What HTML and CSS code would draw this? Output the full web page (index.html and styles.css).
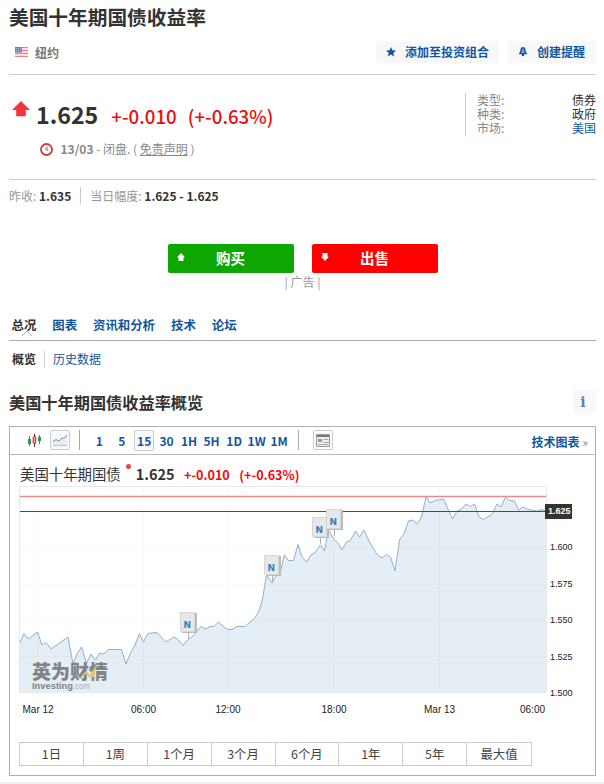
FILE: index.html
```html
<!DOCTYPE html>
<html lang="zh-CN">
<head>
    <meta charset="UTF-8">
    <meta name="viewport" content="width=device-width, initial-scale=1.0">
    <title>美国十年期国债收益率</title>
    <link rel="stylesheet" href="styles.css">
</head>
<body>
    <div class="page">
        <h1>美国十年期国债收益率</h1>
        <div class="exchange-row">
            <svg class="flag" width="13" height="10" viewBox="0 0 13 10">
                <rect width="13" height="10" fill="#f5dfe2"/>
                <path d="M0 .5h13M0 3.5h13M0 6.5h13M0 9.5h13" stroke="#e5848c"/>
                <rect width="7" height="5.5" fill="#7380b5"/>
                <path d="M1 1.5h5M1 3.5h5" stroke="#b5bddb" stroke-dasharray="1 1"/>
            </svg>
            <span class="exchange">纽约</span>
            <a class="tool-btn portfolio">
                <svg width="10" height="10" viewBox="0 0 10 10"><path d="M5 0l1.4 3.3 3.6.3-2.7 2.3.8 3.6L5 7.6 1.9 9.5l.8-3.6L0 3.6l3.6-.3z" fill="#1256a0"/></svg>
                <span>添加至投资组合</span>
            </a>
            <a class="tool-btn alert">
                <svg width="10" height="10" viewBox="0 0 10 10"><path d="M5 .8C3 .8 3 2.8 2.9 4.5L1.9 6.6h6.2L7.1 4.5C7 2.8 7 .8 5 .8z" fill="#7fa3cb" stroke="#1256a0" stroke-width="1.4"/><path d="M3.8 7h2.4v2H3.8z" fill="#1256a0"/></svg>
                <span>创建提醒</span>
            </a>
        </div>

        <div class="quote">
            <div class="quote-left">
                <div class="price-row">
                    <svg class="arrow" width="18" height="16" viewBox="0 0 18 16"><path d="M9 0l9 9h-4.2v6.2H4.2V9H0z" fill="#f5333a"/></svg>
                    <span class="price">1.625</span>
                    <span class="change">+-0.010</span>
                    <span class="percent">(+-0.63%)</span>
                </div>
                <div class="status">
                    <svg width="13" height="13" viewBox="0 0 13 13"><circle cx="6.5" cy="6.5" r="5.5" fill="none" stroke="#d8323c" stroke-width="1.8"/><path d="M7 3.5v3.2l-2-.8M7 6.5l1 1.5" fill="none" stroke="#777"/></svg>
                    <span><b>13/03</b> - 闭盘. ( <a>免责声明</a> )</span>
                </div>
            </div>
            <dl class="facts">
                <dt>类型:</dt><dd>债券</dd>
                <dt>种类:</dt><dd>政府</dd>
                <dt>市场:</dt><dd class="link">美国</dd>
            </dl>
        </div>

        <div class="summary">
            <span>昨收: <b>1.635</b></span>
            <span>当日幅度: <b>1.625 - 1.625</b></span>
        </div>

        <div class="trade">
            <a class="buy"><svg width="8" height="8" viewBox="0 0 8 8"><path d="M4 0l4 4.2H6.5V8h-5V4.2H0z" fill="#fff"/></svg>购买</a>
            <a class="sell"><svg width="8" height="8" viewBox="0 0 8 8"><path d="M4 8l4-4.2H6.5V0h-5v3.8H0z" fill="#fff"/></svg>出售</a>
        </div>
        <div class="ad">| 广告 |</div>

        <nav class="tabs">
            <a class="active">总况<svg width="10" height="6" viewBox="0 0 10 6"><path d="M0 6l5-5 5 5" fill="#fff" stroke="#b5b5b5"/></svg></a>
            <a>图表</a>
            <a>资讯和分析</a>
            <a>技术</a>
            <a>论坛</a>
        </nav>
        <nav class="subtabs">
            <a class="active">概览</a>
            <a>历史数据</a>
        </nav>

        <div class="overview-head">
            <h2>美国十年期国债收益率概览</h2>
            <span class="info">i</span>
        </div>

        <div class="chart-box">
            <div class="toolbar">
                <svg class="candles" width="13" height="13" viewBox="0 0 13 13">
                    <path d="M1.5 2v10M11.5 1v9" stroke="#289c48"/>
                    <path d="M6.5 0v13" stroke="#8b2020"/>
                    <path d="M0 5h3v5H0zM10 3h3v4h-3z" fill="#289c48"/>
                    <rect x="5.2" y="2.5" width="2.6" height="7" rx="1" fill="#f7a0a0" stroke="#a12c2c"/>
                </svg>
                <span class="area-btn">
                    <svg width="14" height="12" viewBox="0 0 14 12"><path d="M0 7.5l3-2 3 1.5 3-3 2 .3L14 1v11H0z" fill="#e4ebf3"/><path d="M0 7.5l3-2 3 1.5 3-3 2 .3L14 1" fill="none" stroke="#6f93c0"/><path d="M0 11.5h14" stroke="#b3c3d6"/></svg>
                </span>
                <div class="intervals">
                    <a>1</a>
                    <a>5</a>
                    <a class="selected">15</a>
                    <a>30</a>
                    <a>1H</a>
                    <a>5H</a>
                    <a>1D</a>
                    <a>1W</a>
                    <a>1M</a>
                </div>
                <span class="news-btn">
                    <svg width="14" height="13" viewBox="0 0 14 13"><path d="M.5.5h13v12H.5z" fill="#eee" stroke="#999"/><path d="M1 2h12" stroke="#777" stroke-width="2"/><path d="M2 5h4v3H2z" fill="#999"/><path d="M7.5 5.5h5M7.5 8.5h5M2 10.5h10" stroke="#aaa"/></svg>
                </span>
                <a class="tech-link">技术图表 <i>»</i></a>
            </div>
            <div class="legend">
                <span class="name">美国十年期国债</span>
                <span class="dot"></span>
                <b class="last">1.625</b>
                <b class="diff">+-0.010</b>
                <b class="diff">(+-0.63%)</b>
            </div>
            <svg class="chart" width="585" height="232" viewBox="10 486 585 232">
                <path d="M19.5 693V486.5H546.5V693" fill="none" stroke="#e8e8e8"/>
                <path id="area" class="area"/>
                <path class="grid" d="M20 547.5H546M20 584.5H546M20 620.5H546M20 656.5H546M37.5 487V693M143.5 487V693M228.5 487V693M333.5 487V693M439.5 487V693"/>
                <path id="line" class="line"/>
                <path d="M20 496.5H546" stroke="#e88b8f" stroke-width="1.4"/>
                <path d="M20 511.5H546" stroke="#55494d" stroke-width="1.2"/>
                <g id="news"></g>
                <g class="watermark">
                    <text class="cn" x="32" y="679" textLength="76" lengthAdjust="spacingAndGlyphs">英为财情</text>
                    <path d="M79 679l7-8 4 4 7-11-3 13-4 1-4-4z" fill="#e9c36a"/>
                    <text class="en" x="32" y="689" textLength="41" lengthAdjust="spacingAndGlyphs">Investing</text>
                    <text class="com" x="73" y="689" textLength="17" lengthAdjust="spacingAndGlyphs">.com</text>
                </g>
                <rect x="545" y="504" width="27" height="15" fill="#333"/>
                <text class="axis now" x="548" y="514">1.625</text>
                <g class="axis">
                    <text x="550" y="550">1.600</text>
                    <text x="550" y="587">1.575</text>
                    <text x="550" y="623">1.550</text>
                    <text x="550" y="660">1.525</text>
                    <text x="550" y="696">1.500</text>
                </g>
                <g class="axis time">
                    <text x="22.5" y="713">Mar 12</text>
                    <text x="131" y="713">06:00</text>
                    <text x="215.5" y="713">12:00</text>
                    <text x="321.5" y="713">18:00</text>
                    <text x="424" y="713">Mar 13</text>
                    <text x="520" y="713">06:00</text>
                </g>
            </svg>
            <div class="ranges">
                <a>1日</a>
                <a>1周</a>
                <a>1个月</a>
                <a>3个月</a>
                <a>6个月</a>
                <a>1年</a>
                <a>5年</a>
                <a>最大值</a>
            </div>
        </div>
    </div>
    <div class="bottom-line"></div>
    <script src="chart.js"></script>
</body>
</html>
```
FILE: styles.css
```css
* {
    box-sizing: border-box;
}
body {
    margin: 0;
    background: #fff;
    color: #333;
    font-family: "Noto Sans CJK SC", sans-serif;
    font-size: 12px;
    line-height: 14px;
}
svg {
    display: block;
    flex: none;
}
.page {
    height: 776px;
    padding: 0 8px 0 9px;
}
h1 {
    height: 34px;
    margin: 0;
    font-size: 19.7px;
    line-height: 33px;
}
.exchange-row {
    display: flex;
    align-items: center;
    height: 41px;
    padding: 0 0 4px 6px;
    border-bottom: 1px solid #ccc;
}
.exchange {
    margin: 2px auto 0 7px;
    color: #777;
    font-weight: bold;
}
.tool-btn {
    display: flex;
    align-items: center;
    height: 22px;
    padding: 0 10px;
    background: #f8f8f8;
    color: #1256a0;
    font-weight: bold;
}
.tool-btn svg {
    margin-right: 9px;
}
.alert {
    width: 88px;
    margin-left: 9px;
}
.quote {
    display: flex;
    justify-content: space-between;
    height: 105px;
    border-bottom: 1px solid #ccc;
}
.quote-left {
    padding: 22px 0 0 3px;
}
.price-row {
    display: flex;
    align-items: baseline;
    height: 35px;
    line-height: 35px;
    white-space: nowrap;
}
.arrow {
    align-self: flex-start;
    margin-top: 4px;
}
.price {
    margin: 0 13px 0 6px;
    font-size: 23.2px;
    font-weight: bold;
}
.change, .percent {
    color: #f00a0a;
    font-size: 18.7px;
    font-weight: 500;
}
.percent {
    margin-left: 11px;
}
.status {
    display: flex;
    align-items: center;
    height: 34px;
    padding-left: 28px;
    color: #888;
}
.status span {
    margin-left: 7.5px;
}
.status a {
    text-decoration: underline;
}
.facts {
    display: grid;
    grid-template-columns: 1fr auto;
    grid-auto-rows: 14px;
    width: 131px;
    height: 43px;
    margin: 18px 0 0;
    padding-left: 11px;
    border-left: 1px solid #ccc;
}
.facts dt {
    color: #888;
}
.facts dd {
    margin: 0;
}
.facts .link {
    color: #1256a0;
}
.summary {
    display: flex;
    height: 64px;
    padding-top: 7px;
    color: #999;
    line-height: 18px;
}
.summary span {
    height: 17px;
}
.summary span + span {
    margin-left: 9px;
    padding-left: 9px;
    border-left: 1px solid #ccc;
}
.summary b {
    color: #333;
}
.trade {
    display: flex;
    justify-content: center;
    gap: 18px;
    height: 29px;
}
.trade a {
    position: relative;
    width: 126px;
    border-radius: 2px;
    color: #fff;
    font-size: 14.5px;
    font-weight: bold;
    line-height: 27px;
    text-align: center;
}
.trade svg {
    position: absolute;
    left: 9px;
    top: 9px;
}
.buy {
    background: #0ea600;
}
.sell {
    background: #fe0000;
}
.ad {
    height: 37px;
    padding-top: 2px;
    color: #999;
    text-align: center;
}
.tabs {
    display: flex;
    gap: 16px;
    height: 31px;
    padding-left: 2.5px;
    border-bottom: 1px solid #aaa;
    color: #1256a0;
    font-size: 12.4px;
    font-weight: bold;
    line-height: 30px;
}
.tabs a {
    position: relative;
}
.tabs .active svg {
    position: absolute;
    left: 10px;
    top: 20px;
}
.active {
    color: #333;
    font-weight: bold;
}
.subtabs {
    display: flex;
    height: 49px;
    padding: 10px 0 0 3px;
    color: #1256a0;
    line-height: 16px;
}
.subtabs a {
    height: 17px;
}
.subtabs a + a {
    margin-left: 8px;
    padding-left: 8px;
    border-left: 1px solid #ccc;
}
.overview-head {
    display: flex;
    justify-content: space-between;
    height: 36px;
}
h2 {
    margin: 0;
    font-size: 16.2px;
    line-height: 24px;
}
.info {
    width: 23px;
    height: 23px;
    padding-right: 3px;
    background: #f8f8f8;
    color: #5a80b4;
    font: bold 14px/24px "DejaVu Serif", serif;
    text-align: center;
}
.chart-box {
    height: 350px;
    border: 1px solid #b0b0b0;
}
.toolbar {
    display: flex;
    align-items: center;
    height: 28px;
    padding: 0 7px 1px 18px;
    border-bottom: 1px solid #bbb;
    color: #1256a0;
    font-weight: bold;
}
.area-btn, .news-btn {
    display: flex;
    align-items: center;
    justify-content: center;
    width: 20px;
    height: 20px;
    border: 1px solid #ccc;
    border-radius: 2px;
}
.area-btn {
    margin: 0 9px;
    background: #f7f9fc;
}
.intervals {
    display: flex;
    align-items: center;
    width: 220px;
    height: 20px;
    padding-left: 8px;
    border: solid #aaa;
    border-width: 0 1px;
}
.intervals a {
    width: 22.5px;
    flex: none;
    line-height: 19px;
    text-align: center;
    white-space: nowrap;
}
.intervals .selected {
    width: 20px;
    margin: 0 1.2px;
    border: 1px solid #ccc;
    border-radius: 2px;
    background: #f7f9fc;
}
.news-btn {
    margin-left: 14px;
}
.tech-link {
    margin: 3px 0 0 auto;
}
.tech-link i {
    color: #888;
    font-style: normal;
    font-weight: normal;
}
.legend {
    display: flex;
    align-items: baseline;
    height: 31px;
    padding-left: 10px;
    line-height: 38px;
    white-space: nowrap;
}
.name {
    font-size: 14.4px;
}
.dot {
    align-self: flex-start;
    width: 5px;
    height: 5px;
    margin: 9px 5px 0 5px;
    border-radius: 50%;
    background: #e9474c;
}
.last {
    font-size: 14.4px;
}
.diff {
    margin-left: 9.5px;
    color: #f00a0a;
    font-size: 12.6px;
}
.area {
    fill: #e5eef4;
}
.line {
    fill: none;
    stroke: #8db1d0;
}
.grid {
    fill: none;
    stroke: #000;
    stroke-opacity: 0.025;
}
.watermark {
    fill: #808486;
}
.cn {
    font-size: 19px;
    font-weight: 900;
}
.en, .com {
    font-family: "Liberation Sans", sans-serif;
    font-size: 9px;
}
.en {
    font-weight: bold;
}
.com {
    fill: #a5abaf;
}
.axis {
    fill: #222;
    font-family: "Liberation Sans", sans-serif;
    font-size: 9px;
}
.time {
    font-size: 10px;
}
.now {
    fill: #fff;
    font-weight: bold;
}
.pin-shadow {
    fill: #bcbcbc;
}
.pin {
    fill: #e7e7e7;
    stroke: #d8d5d5;
}
.pin-text {
    fill: #3182c4;
    font: bold 9px "DejaVu Sans", sans-serif;
}
.ranges {
    display: flex;
    width: 513px;
    height: 24px;
    margin: 24px 0 0 9px;
    border: 1px solid #ccc;
}
.ranges a {
    width: 64px;
    border-right: 1px solid #ccc;
    color: #444;
    font-size: 12.4px;
    line-height: 22px;
    text-align: center;
}
.ranges a:last-child {
    border-right: 0;
}
.bottom-line {
    height: 2px;
    margin-top: 6px;
    background: #eee;
}
```
FILE: chart.js
```javascript
const puntos = [
    [20, 642.5], [24, 633.7], [28.5, 639], [37.5, 632], [42, 645], [46, 642.5], [51, 649], [68, 637],
    [73, 664], [77, 654], [81.5, 647], [86.5, 663], [91, 654], [95.5, 660], [99.5, 653], [104, 654],
    [108, 649.5], [121.5, 649.5], [126, 664], [130.5, 653], [135, 645], [139.5, 633.5], [143.5, 642],
    [148, 633.5], [157, 632.5], [165.5, 642], [174, 637], [178.5, 640], [183, 645.5], [187.5, 640],
    [193, 636], [201, 626.5], [205.5, 629], [210, 626.5], [214, 626.5], [218.5, 622], [224, 627],
    [228, 629.5], [232, 629.5], [237, 626.5], [245, 626.5], [250, 622], [254.5, 618.5], [259, 611],
    [262.5, 599], [266.5, 575], [272, 583], [275, 577], [280, 573], [284.5, 555], [288.5, 560.5],
    [293.5, 560.5], [298, 544.5], [302, 557], [306.5, 562], [311, 555], [315, 552.5], [320.5, 545],
    [324.5, 551], [328.5, 530], [333, 538], [338, 543], [342, 550], [346.5, 542], [350.5, 540.5],
    [355.5, 531], [359.5, 537], [364, 530], [369, 541], [377, 554.5], [382, 558], [386.5, 554.5],
    [390.5, 557], [395, 571], [399.5, 540], [404, 534], [408.5, 521], [413, 520], [417, 524],
    [421.5, 517], [426, 497], [430.5, 503], [435, 500.5], [443.5, 499], [448, 509], [452.5, 519],
    [457, 511], [461, 509.5], [466, 504], [470.5, 506.5], [474.5, 504], [479, 517], [483.5, 519.5],
    [492.5, 514], [497, 504], [501, 507], [505.5, 497], [509.5, 500.5], [514.5, 501], [518.5, 510],
    [523, 507], [528, 509.5], [537, 511], [542, 509.5], [546, 511]
];
const trazo = 'M' + puntos.map(p => p.join(' ')).join('L');
document.getElementById('line').setAttribute('d', trazo);
document.getElementById('area').setAttribute('d', trazo + 'V693H20Z');

// x, y of each news marker
const noticias = [[180, 612], [264, 555], [312, 517], [326, 509]];
document.getElementById('news').innerHTML = noticias.map(([x, y]) => `
    <path class="pin-shadow" d="M${x + 2} ${y + 1}h15v20h-15z"/>
    <path d="M${x + 8.5} ${y + 20}v7" stroke="#aab3bb"/>
    <path class="pin" d="M${x + 0.5} ${y + 0.5}h14v19h-14z"/>
    <text class="pin-text" x="${x + 3.5}" y="${y + 16}">N</text>
`).join('');
```
